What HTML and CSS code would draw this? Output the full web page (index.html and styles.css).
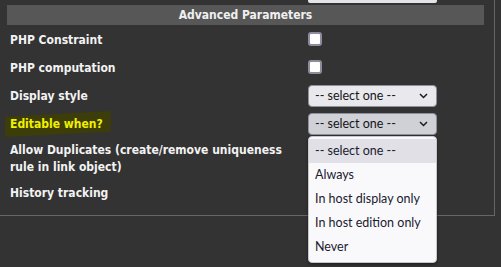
FILE: index.html
```html
<!DOCTYPE html>
<html>
<head>
<meta charset="utf-8">
<link rel="stylesheet" href="styles.css">
</head>
<body>
<div class="panel">
  <div class="stub"></div>
  <div class="section-title">Advanced Parameters</div>
  <div class="rows">
    <div class="row">
      <div class="label">PHP Constraint</div>
      <div class="ctrl"><span class="check"></span></div>
    </div>
    <div class="row">
      <div class="label">PHP computation</div>
      <div class="ctrl"><span class="check"></span></div>
    </div>
    <div class="row">
      <div class="label">Display style</div>
      <div class="ctrl">
        <div class="select"><span>-- select one --</span><svg class="chev" width="9" height="6" viewBox="0 0 9 6"><path d="M1 1 L4.5 4.5 L8 1" fill="none" stroke="#1a1a24" stroke-width="1.5"/></svg></div>
      </div>
    </div>
    <div class="row">
      <div class="label"><span class="marked">Editable when?</span></div>
      <div class="ctrl">
        <div class="select open"><span>-- select one --</span><svg class="chev" width="9" height="6" viewBox="0 0 9 6"><path d="M1 1 L4.5 4.5 L8 1" fill="none" stroke="#1a1a24" stroke-width="1.5"/></svg>
          <div class="dropdown">
            <div class="opt active">-- select one --</div>
            <div class="opt">Always</div>
            <div class="opt">In host display only</div>
            <div class="opt">In host edition only</div>
            <div class="opt">Never</div>
          </div>
        </div>
      </div>
    </div>
    <div class="row tall">
      <div class="label">Allow Duplicates (create/remove uniqueness rule in link object)</div>
      <div class="ctrl"></div>
    </div>
    <div class="row">
      <div class="label">History tracking</div>
      <div class="ctrl"></div>
    </div>
  </div>
</div>
</body>
</html>
```

FILE: styles.css
```css
html, body {
  margin: 0;
  padding: 0;
  background: #333333;
  height: 100%;
}
body {
  font-family: "DejaVu Sans Condensed", "DejaVu Sans", sans-serif;
}
.panel {
  box-sizing: border-box;
  width: 495px;
  height: 216px;
  border-right: 1px solid #666666;
  border-bottom: 1px solid #666666;
}
.stub {
  margin-left: 308px;
  width: 129px;
  height: 3px;
  background: #e4e4e8;
  border-radius: 0 0 2px 2px;
}
.section-title {
  margin: 2px 0 0 7px;
  width: 477px;
  height: 20px;
  background: #575757;
  color: #f0f0f0;
  font-family: "DejaVu Sans Condensed", "DejaVu Sans", sans-serif;
  font-weight: bold;
  font-size: 12px;
  line-height: 20px;
  text-align: center;
}
.rows {
  display: flex;
  flex-direction: column;
  padding-top: 1px;
}
.row {
  display: grid;
  grid-template-columns: 298px 1fr;
  padding-left: 10px;
  min-height: 28px;
  align-items: center;
}
.row.tall {
  min-height: 40px;
  padding-top: 1px;
}
.label {
  color: #f2f2f2;
  font-family: "DejaVu Sans Condensed", "DejaVu Sans", sans-serif;
  font-weight: bold;
  font-size: 12px;
  line-height: 17px;
  padding-right: 8px;
}
.marked {
  display: inline-block;
  margin: -4px 0 -4px -5px;
  padding: 5px 8px 4px 5px;
  color: #f0f000;
  background: #3d3d0a;
  clip-path: polygon(0 22%, 100% 0, 100% 80%, 0 100%);
}
.ctrl {
  display: flex;
  align-items: center;
}
.check {
  box-sizing: border-box;
  width: 14px;
  height: 14px;
  margin-top: -2px;
  background: #ffffff;
  border: 2px solid #8c8c9c;
  border-radius: 3px;
}
.select {
  position: relative;
  box-sizing: border-box;
  width: 129px;
  height: 22px;
  margin-top: -1px;
  background: #e9e9ed;
  border: 1px solid #8f8f9d;
  border-radius: 4px;
  display: flex;
  align-items: center;
  justify-content: space-between;
  padding: 0 8px 0 6px;
  font-family: Lato, "Noto Sans", sans-serif;
  font-size: 12.5px;
  color: #15141a;
}
.select.open {
  background: #d0d0d7;
}
.chev {
  display: block;
}
.dropdown {
  position: absolute;
  left: -1px;
  top: 22px;
  box-sizing: border-box;
  width: 129px;
  height: 127px;
  padding: 2px 0 4px;
  background: #f9f9fb;
  border: 1px solid #c8c8cc;
  border-radius: 4px;
  box-shadow: 0 1px 3px rgba(0,0,0,0.5);
}
.opt {
  height: 24px;
  line-height: 24px;
  padding-left: 6px;
  color: #1b1a30;
  white-space: nowrap;
}
.opt.active {
  background: #e0e0e6;
}
```
